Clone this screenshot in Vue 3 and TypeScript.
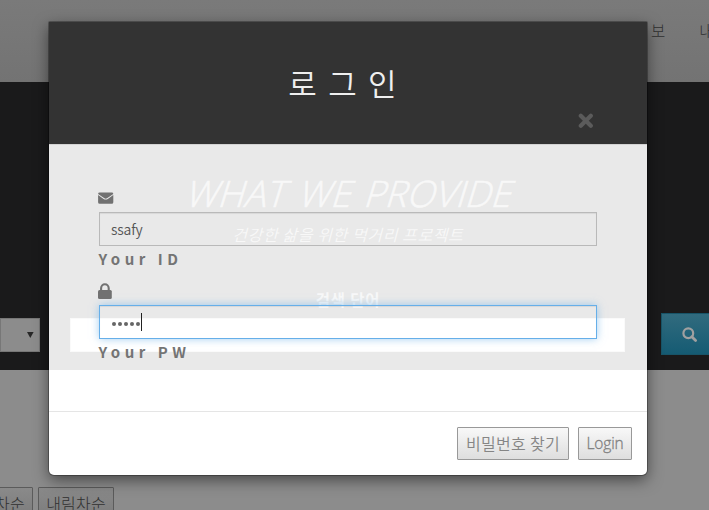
<script setup lang="ts">
import { ref } from 'vue'

const userId = ref('ssafy')
const password = ref('12345')
</script>

<template>
  <div class="screen">
    <div class="page">
      <nav class="nav"><span>보</span><span>내</span></nav>
      <section class="hero">
        <div class="select"><svg width="7" height="7" viewBox="0 0 7 7"><path d="M0 0h6.6L3.3 6z" fill="#272727" /></svg></div>
        <div class="search">
          <svg width="16" height="16" viewBox="0 0 16 16"><circle cx="6.3" cy="6.2" r="4.9" fill="none" stroke="#a0a0a0" stroke-width="2.2" /><path d="M9.8 9.8l3.8 3.8" stroke="#a0a0a0" stroke-width="2.8" stroke-linecap="round" /></svg>
        </div>
      </section>
      <div class="sort"><span class="sort-btn first">오름차순</span><span class="sort-btn">내림차순</span></div>
    </div>

    <div class="modal">
      <header class="head">
        <h4>로 그 인</h4>
        <svg class="close" width="16" height="16" viewBox="0 0 16 16"><path d="M2.8 2.8l10 10M12.8 2.8l-10 10" stroke="#5b5b5b" stroke-width="4.2" stroke-linecap="round" /></svg>
      </header>
      <div class="body">
        <div class="ghost">
          <div class="ghost-title">WHAT WE PROVIDE</div>
          <div class="ghost-sub">건강한 삶을 위한 먹거리 프로젝트</div>
          <div class="ghost-label">검색 단어</div>
          <div class="ghost-input"></div>
        </div>
        <form class="form">
          <svg class="icon" width="16" height="16" viewBox="0 0 16 16">
            <path d="M1.7 2.5h12.1q1.5 0 1.5 1.4L9 8.2q-1.3.9-2.6 0L.1 3.9q0-1.4 1.6-1.4zM.1 5.1l5.5 3.8q2.1 1.4 4.2 0l5.5-3.8v7.1q0 1.6-1.6 1.6H1.7Q.1 13.8.1 12.2z" fill="#717171" />
          </svg>
          <div class="field">{{ userId }}</div>
          <label>Your ID</label>
          <svg class="icon lock" width="16" height="16" viewBox="0 0 16 16">
            <path d="M3.1 8V5.2a3.8 4 0 0 1 7.6 0V8" fill="none" stroke="#717171" stroke-width="2.1" />
            <rect x="0" y="7" width="13.8" height="9" rx="1.5" fill="#717171" />
          </svg>
          <div class="field focus"><i v-for="n in password.length" :key="n" class="dot"></i><i class="caret"></i></div>
          <label>Your PW</label>
        </form>
      </div>
      <footer class="foot"><button class="find">비밀번호 찾기</button><button class="login">Login</button></footer>
    </div>
  </div>
</template>

<style>
body { overflow: hidden; }
</style>

<style scoped>
* { box-sizing: border-box; }
.screen { position: relative; width: 709px; height: 510px; overflow: hidden; font-family: "Noto Sans CJK KR", sans-serif; }
.page { height: 510px; background: #8c8c8c; }
.nav { height: 82px; background: linear-gradient(#7a7a7a, #737373); padding: 18px 0 0 651px; display: flex; gap: 34px; font-size: 15.5px; line-height: 25px; font-weight: 300; color: #303030; }
.nav span { flex: none; }
.hero { height: 288px; background: #1a1a1b; display: flex; justify-content: space-between; padding-top: 231px; }
.select { width: 40px; height: 34px; margin-top: 5px; background: #8c8c8c; border: 1px solid #777; display: flex; align-items: center; justify-content: flex-end; padding-right: 5px; }
.search { width: 48px; height: 42px; background: linear-gradient(#316b7e, #155b73); border: 1px solid #185468; border-right: 0; padding: 13px 0 0 20px; }
.search svg { display: block; }
.sort { display: flex; padding-top: 117px; gap: 5px; justify-content: flex-start; }
.sort-btn { height: 33px; width: 76px; flex: none; border: 1px solid #5b5b5b; border-radius: 1px; background: linear-gradient(#8a8a8a, #7b7b7b); font-size: 16px; line-height: 31px; text-align: center; font-weight: 300; color: #303030; letter-spacing: .2px; }
.first { margin-left: -43px; }
.modal { position: absolute; left: 49px; top: 22px; width: 598px; height: 453px; background: #fff; border-radius: 1px 1px 5px 5px; box-shadow: 0 0 0 1px rgba(0,0,0,.28), 0 5px 15px rgba(0,0,0,.5); display: flex; flex-direction: column; }
.head { position: relative; height: 122px; background: #333; text-align: center; padding-right: 9px; }
.head h4 { margin: 0; padding-top: 38px; font-size: 31px; line-height: 46px; font-weight: 350; color: #efefef; letter-spacing: 2.2px; }
.close { position: absolute; left: 529px; top: 91px; }
.body { position: relative; height: 267px; background: linear-gradient(#e9e9e9 0 225px, #fff 225px); border-top: 1px solid #d3d3d3; }
.ghost { position: absolute; inset: 0; color: #f8f8f8; text-align: center; }
.ghost-title { font: 300 36.5px/48px "Open Sans", sans-serif; padding-top: 24px; padding-left: 14px; transform: skewX(-17deg); letter-spacing: 0; word-spacing: 3.5px; -webkit-text-stroke: .6px #f8f8f8; }
.ghost-sub { font-size: 16px; line-height: 22px; padding-top: 6px; padding-left: 5px; letter-spacing: .6px; transform: skewX(-15deg); font-weight: 350; }
.ghost-label { font-size: 15.5px; line-height: 24px; margin-top: 42px; font-weight: 700; letter-spacing: .8px; }
.ghost-input { height: 34px; margin: 7px 22px 0 21px; background: #fff; border: 1px solid #fafafa; }
.form { position: relative; padding: 45px 50px 0 49px; }
.icon { display: block; height: 16px; }
.field { height: 34px; margin-top: 6px; margin-left: 1px; width: 498px; border: 1px solid #b9b9b9; box-shadow: inset 0 1px 1px rgba(0,0,0,.075); padding-left: 11px; font: 350 14px/34px "Noto Sans CJK KR", sans-serif; color: #555; letter-spacing: -.2px; display: flex; align-items: center; }
.focus { padding-left: 12px; border-color: #66afe9; box-shadow: inset 0 1px 1px rgba(0,0,0,.075), 0 0 8px rgba(102,175,233,.6); }
.dot { width: 4px; height: 4px; border-radius: 50%; background: #666; margin-right: 2px; margin-top: 3px; }
.caret { width: 1px; height: 18px; background: #222; margin-left: -1px; }
label { display: block; font-size: 15px; line-height: 26px; height: 26px; letter-spacing: 4.5px; font-weight: 700; color: #747474; padding-left: .5px; }
.lock { margin-top: 11px; }
.foot { flex: 1; border-top: 1px solid #e5e5e5; display: flex; justify-content: flex-end; gap: 9px; padding: 15px 15px 0 0; }
button { height: 33px; padding: 0; border: 1px solid #999; border-radius: 1px; background: linear-gradient(#f8f8f8, #dedede); color: #858585; font: 350 16px/29px "Noto Sans CJK KR", sans-serif; letter-spacing: .3px; }
.find { width: 112px; padding-bottom: 1px; }
.login { width: 54px; font: 300 15.5px/31px "Open Sans", sans-serif; letter-spacing: -.1px; color: #808080; -webkit-text-stroke: .3px #808080; }
</style>
